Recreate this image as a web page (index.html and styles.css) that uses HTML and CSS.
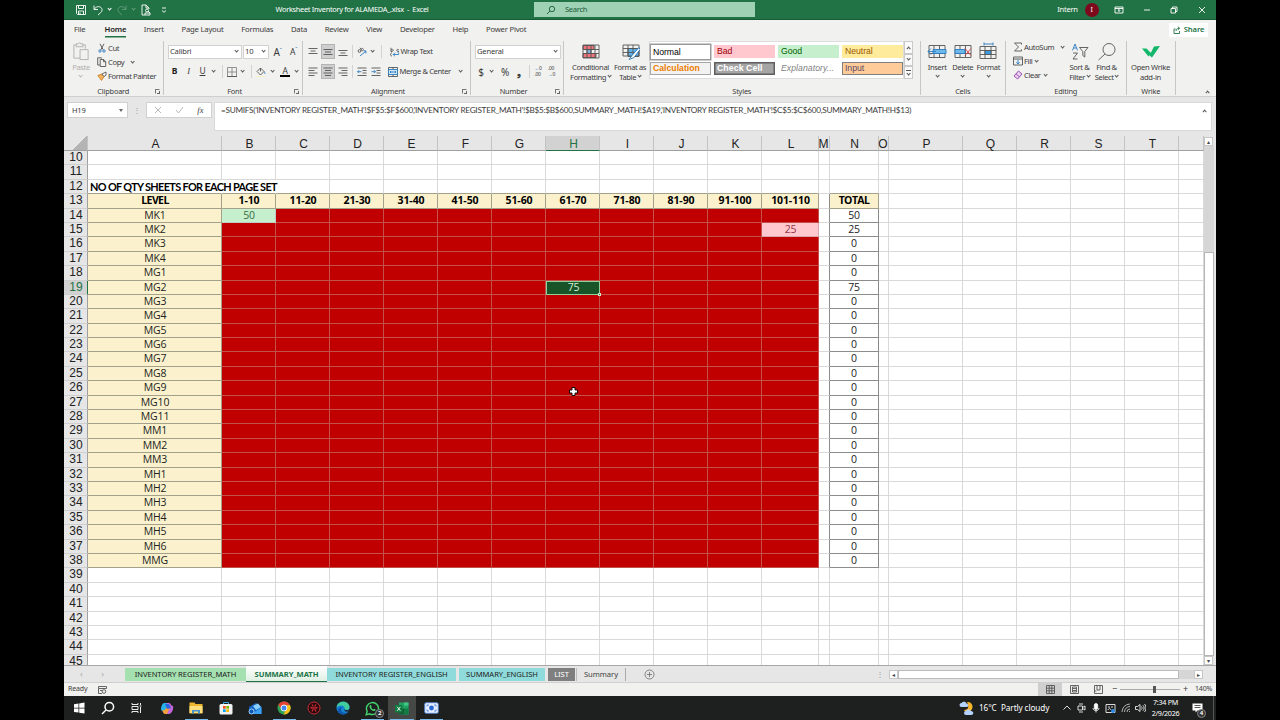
FILE: index.html
```html
<!DOCTYPE html>
<html lang="en">
<head>
  <meta charset="UTF-8">
  <meta name="viewport" content="width=device-width, initial-scale=1">
  <title>Worksheet Inventory for ALAMEDA_.xlsx - Excel</title>
  <link rel="stylesheet" href="styles.css">
</head>
<body>
<div class="desktop">

  <!-- Title bar -->
  <header class="titlebar">
    <div class="quick">
      <svg width="12" height="12" viewBox="0 0 12 12"><path d="M1.500 1.500h9v9h-8l-1-1zM3.500 1.500v3h5v-3M3.500 10.500v-3.500h5v3.500M5 8.500v2"/></svg>
      <svg width="12" height="12" viewBox="0 0 12 12"><path d="M2 1.500v4h4M2.200 5.300C4 2.500 7 2 8.700 3.300c2 1.700 1.600 4-.2 5.500L6 11"/></svg>
      <i class="chev"></i>
      <svg class="dim" width="12" height="12" viewBox="0 0 12 12"><path d="M10 1.500v4H6M9.800 5.300C8 2.500 5 2 3.300 3.300c-2 1.700-1.600 4 .2 5.500L6 11"/></svg>
      <i class="chev dim"></i>
      <svg width="12" height="12" viewBox="0 0 12 12"><path d="M5 11H2V1h4l3 3v1M6 1v3h3"/><circle cx="7" cy="6.500" r="1.500"/><path d="M5 11V9h5v2zM8 7l2 2"/></svg>
      <svg width="8" height="8" viewBox="0 0 8 8"><path d="M2 2h4M2 4.500l2 1.800 2-1.800"/></svg>
    </div>
    <div class="doc-title">Worksheet Inventory for ALAMEDA_.xlsx &nbsp;-&nbsp; Excel</div>
    <div class="search">
      <svg width="10" height="10" viewBox="0 0 10 10"><circle cx="6" cy="4" r="2.700"/><path d="M4 6L1 9"/></svg>
      <span>Search</span>
    </div>
    <div class="window-tools">
      <span class="user">Intern</span>
      <span class="avatar">I</span>
      <svg width="10" height="10" viewBox="0 0 10 10"><path d="M1 2h8v6H1zM1 3.500h8M5 7V4.500M3.800 5.700L5 4.500l1.200 1.200"/></svg>
      <svg width="8" height="8" viewBox="0 0 8 8"><path d="M1 4h6"/></svg>
      <svg width="8" height="8" viewBox="0 0 8 8"><path d="M1 2.500h4.500V7H1zM2.500 2.500V1H7v4.500H5.500"/></svg>
      <svg width="8" height="8" viewBox="0 0 8 8"><path d="M1 1l6 6M7 1L1 7"/></svg>
    </div>
  </header>

  <!-- Ribbon tabs -->
  <nav class="tabs">
    <a>File</a><a class="active">Home</a><a>Insert</a><a>Page Layout</a><a>Formulas</a><a>Data</a><a>Review</a><a>View</a><a>Developer</a><a>Help</a><a>Power Pivot</a>
    <button class="share">
      <svg width="8" height="8" viewBox="0 0 8 8"><path d="M2.500 3H1v4.500h5.500V5M3 5c.2-2 1-2.700 3-2.700M4.800.7l1.900 1.600-1.900 1.600"/></svg>Share
    </button>
  </nav>

  <!-- Ribbon -->
  <section class="ribbon">
    <div class="group clipboard">
      <div class="tools">
        <div class="big disabled">
          <svg width="18" height="20" viewBox="0 0 18 20"><path d="M4 3H1.500v14H8M11 3h2.500v4M4 2h2.200c0-1.500 2.600-1.500 2.600 0H11v3H4zM8 8h8.500v10.500H8z"/></svg>
          <span>Paste</span><i class="chev"></i>
        </div>
        <div class="list">
          <div><svg width="10" height="10" viewBox="0 0 10 10"><path d="M3 .8l3.200 6M7 .8L3.800 6.800"/><g class="blue"><circle cx="3" cy="8" r="1.200"/><circle cx="7" cy="8" r="1.200"/></g></svg>Cut</div>
          <div><svg width="10" height="10" viewBox="0 0 10 10"><path d="M3 8H.7V.8h3.500L5 1.600M3.200 2.500h3.500l2 2v5H3.200zM6.500 2.500v2.200h2.200"/></svg>Copy<i class="chev"></i></div>
          <div><svg width="10" height="10" viewBox="0 0 10 10"><path d="M.8 4.500L5 3l2 2.500-2.500 4z" fill="#f4b25c" stroke="#c98328"/><path d="M5 3l4-2v3L7 5.500z" fill="#fff"/></svg>Format Painter</div>
        </div>
      </div>
      <div class="caption">Clipboard</div><i class="launch"></i>
    </div>

    <div class="group font">
      <div class="tools rows">
        <div class="row font-top">
          <span class="combo">Calibri<i class="chev"></i></span>
          <span class="combo">10<i class="chev"></i></span>
          <span class="grow">A<sup>ˆ</sup></span>
          <span class="shrink">A<sup>ˇ</sup></span>
        </div>
        <div class="row font-bottom">
          <b>B</b><em>I</em><u>U</u><i class="chev"></i><i class="sep"></i>
          <svg width="10" height="10" viewBox="0 0 10 10"><path d="M.5.500h9v9h-9zM5 .5v9M.5 5h9" stroke="#888"/><path d="M0 9.500h10"/></svg>
          <i class="chev"></i><i class="sep"></i>
          <svg width="10" height="10" viewBox="0 0 10 10"><path d="M4.500 1L8 4.500 4.500 8 1 4.500zM4.500 1v3.500"/><path d="M8 4.500c1 1.300 1.200 2 .5 2.500" class="blue"/><path d="M0 9.500h9" stroke="#f7efc4"/></svg>
          <i class="chev"></i><span class="font-color">A</span><i class="chev"></i>
        </div>
      </div>
      <div class="caption">Font</div><i class="launch"></i>
    </div>

    <div class="group align">
      <div class="tools rows">
        <div class="row align-row">
          <svg width="10" height="10" viewBox="0 0 10 10"><path d="M.5 1.500h9M2.500 4h5M.5 6.500h9"/></svg>
          <span class="on"><svg width="10" height="10" viewBox="0 0 10 10"><path d="M.5 2.500h9M2 5h6M.5 7.500h9"/></svg></span>
          <svg width="10" height="10" viewBox="0 0 10 10"><path d="M.5 3.500h9M2.500 6h5M.5 8.500h9"/></svg>
          <i class="sep"></i>
          <svg width="10" height="10" viewBox="0 0 10 10"><circle cx="2.500" cy="4" r="1.400"/><path d="M3 .8l2.500 3.500M6 3.500c1-1.500-.5-3-1.800-1.500"/><path class="blue" d="M3 9l6-5M6.500 3.700L9 4 8.800 6.500"/></svg>
          <i class="chev"></i><i class="sep"></i>
          <span class="label"><svg width="10" height="10" viewBox="0 0 10 10"><path d="M1 .8v4M1 3c3-2 3 2 0 1.500M9 3C6 1 6 5 9 4.500M2 6c-2 0-2 3 0 3"/><path class="blue" d="M3 7.500h5.500c1-2-1-2.500-1-2.500M5 5.700L3.200 7.500 5 9.300"/></svg>Wrap Text</span>
        </div>
        <div class="row align-row">
          <svg width="10" height="10" viewBox="0 0 10 10"><path d="M.5 1h9M.5 3.500h6M.5 6h9M.5 8.500h6"/></svg>
          <span class="on"><svg width="10" height="10" viewBox="0 0 10 10"><path d="M.5 1h9M2 3.500h6M.5 6h9M2 8.500h6"/></svg></span>
          <svg width="10" height="10" viewBox="0 0 10 10"><path d="M.5 1h9M3.500 3.500h6M.5 6h9M3.500 8.500h6"/></svg>
          <i class="sep"></i>
          <svg width="10" height="10" viewBox="0 0 10 10"><path d="M.5 1h9M5.500 3.500h4M5.500 6h4M.5 8.500h9"/><path class="blue" d="M.5 4.700h4M2 3.200L.5 4.700 2 6.200"/></svg>
          <svg width="10" height="10" viewBox="0 0 10 10"><path d="M.5 1h9M5.500 3.500h4M5.500 6h4M.5 8.500h9"/><path class="blue" d="M.5 4.700h4M3 3.200l1.500 1.500L3 6.200"/></svg>
          <i></i>
          <span class="label merge"><svg width="10" height="10" viewBox="0 0 10 10"><path d="M.5.500h9v9h-9zM5 .5v2M5 7.500v2"/><path d="M.5 2.500h9v5h-9z" fill="#cfe6f7" stroke="#2b7cc0"/><path class="blue" d="M2 5h6M3 4L2 5l1 1M7 4l1 1-1 1"/></svg>Merge &amp; Center<i class="chev"></i></span>
        </div>
      </div>
      <div class="caption">Alignment</div><i class="launch"></i>
    </div>

    <div class="group number">
      <div class="tools rows">
        <div class="row"><span class="combo wide">General<i class="chev"></i></span></div>
        <div class="row number-row">
          <span>$</span><i class="chev"></i><span>%</span><strong>❟</strong><i class="sep"></i>
          <span class="dec"><s>←</s>0<br>.00</span><span class="dec">.00<br><s>→</s>0</span>
        </div>
      </div>
      <div class="caption">Number</div><i class="launch"></i>
    </div>

    <div class="group styles">
      <div class="tools">
        <div class="big">
          <svg width="18" height="16" viewBox="0 0 18 16"><path d="M1 2h11v4H1z" fill="#f2737a"/><path d="M5 6h4v4H5z" fill="#7fb0dd"/><path d="M1 10h13v4H1z" fill="#f2737a"/><path d="M1 1.500h16v13H1zM1 6h16M1 10h16M5 1.500v13M9 1.500v13M13 1.500v13" stroke="#555"/></svg>
          <span>Conditional<br>Formatting <i class="chev"></i></span>
        </div>
        <div class="big">
          <svg width="18" height="18" viewBox="0 0 18 18"><path d="M6 6h11v8H6z" fill="#5fb2ea"/><path d="M1 2.500h16v11H1zM1 6h16M1 10h16M6 2.500v11M11 2.500v11" stroke="#555"/><path d="M17 5l-7 8-3 4 5-2 6-8z" fill="#fff" stroke="#2b7cc0"/></svg>
          <span>Format as<br>Table <i class="chev"></i></span>
        </div>
        <div class="gallery">
          <span class="st normal">Normal</span><span class="st bad">Bad</span><span class="st good">Good</span><span class="st neutral">Neutral</span>
          <span class="st calc">Calculation</span><span class="st check">Check Cell</span><span class="st expl">Explanatory...</span><span class="st input">Input</span>
        </div>
        <div class="gallery-scroll"><span><i class="chev up"></i></span><span><i class="chev"></i></span><span class="more"><i class="chev"></i></span></div>
      </div>
      <div class="caption">Styles</div>
    </div>

    <div class="group cells">
      <div class="tools">
        <div class="big"><svg width="20" height="16" viewBox="0 0 20 16"><path d="M2 2h16v12H2zM2 10h16M7 2v12M12.500 2v12"/><path d="M6 6h13v4H6z" fill="#6cb8ea" stroke="#2b7cc0"/><path class="blue" d="M9 8H1M4 5L1 8l3 3"/></svg><span>Insert</span><i class="chev"></i></div>
        <div class="big"><svg width="20" height="16" viewBox="0 0 20 16"><path d="M2 2h16v12H2zM2 10h16M7 2v12M12.500 2v12"/><path d="M2 6h10v4H2z" fill="#6cb8ea" stroke="#2b7cc0"/><path d="M12 5l6 7M18 5l-6 7" stroke="#e0404a"/></svg><span>Delete</span><i class="chev"></i></div>
        <div class="big"><svg width="20" height="18" viewBox="0 0 20 18"><path d="M2 4h16v12H2zM2 8h16M2 12h16M7 4v12M13 4v12"/><path d="M7 8h6v4H7z" fill="#3c9be0"/><path class="blue" d="M6 1.500h9M6 0v3M15 0v3"/></svg><span>Format</span><i class="chev"></i></div>
      </div>
      <div class="caption">Cells</div>
    </div>

    <div class="group editing">
      <div class="tools">
        <div class="list">
          <div><svg width="10" height="10" viewBox="0 0 10 10"><path d="M8.500 2.500V1H1.500l4 4-4 4h7V7.500"/></svg>AutoSum<i class="chev far"></i></div>
          <div><svg width="10" height="10" viewBox="0 0 10 10"><path d="M.5 1h9v8h-9zM.5 3h9"/><path class="blue" d="M5 3.500v4.500M3.300 6.300L5 8l1.700-1.700"/></svg>Fill<i class="chev"></i></div>
          <div><svg width="10" height="10" viewBox="0 0 10 10"><path d="M5.500 1L9 4 4.500 9 1 6zM3 3.800l3.500 3" fill="#ecd3f3" stroke="#8e3fa8"/></svg>Clear<i class="chev"></i></div>
        </div>
        <div class="big"><svg width="18" height="18" viewBox="0 0 18 18"><path class="blue" d="M1.500 8L4 1.500 6.500 8M2.500 5.500h3"/><path d="M2 10.500h4.500L2 16.500h4.500M8.500 5h8.500l-3.200 4v5.500l-2-1.500V9z"/></svg><span>Sort &amp;<br>Filter <i class="chev"></i></span></div>
        <div class="big"><svg width="20" height="18" viewBox="0 0 20 18"><circle cx="12" cy="7" r="6"/><path d="M8 11.500L1.500 17.500"/></svg><span>Find &amp;<br>Select <i class="chev"></i></span></div>
      </div>
      <div class="caption">Editing</div>
    </div>

    <div class="group wrike">
      <div class="tools">
        <div class="big"><svg width="20" height="16" viewBox="0 0 20 16"><path d="M1 5h4.500L10 9.500 7.500 13zM13 3l6-.5L11 14l-2.500-2z" fill="#12b76a" stroke="none"/></svg><span>Open Wrike<br>add-in</span></div>
      </div>
      <div class="caption">Wrike</div>
    </div>
    <div class="collapse"><i class="chev up"></i></div>
  </section>

  <!-- Formula bar -->
  <section class="formula-bar">
    <div class="name-box">H19<i class="tri"></i></div>
    <div class="grip">⋮</div>
    <div class="fx-box">
      <svg width="8" height="8" viewBox="0 0 8 8"><path d="M1 1l6 6M7 1L1 7"/></svg>
      <svg width="9" height="8" viewBox="0 0 9 8"><path d="M1 4l2.500 3L8 1"/></svg>
      <em>fx</em>
    </div>
    <div class="formula"><span>=SUMIFS('INVENTORY REGISTER_MATH'!$F$5:$F$600,'INVENTORY REGISTER_MATH'!$B$5:$B$600,SUMMARY_MATH!$A19,'INVENTORY REGISTER_MATH'!$C$5:$C$600,SUMMARY_MATH!H$13)</span><i class="chev up"></i></div>
  </section>

  <!-- Worksheet -->
  <main class="sheet">
    <div class="cells-grid" id="grid"></div>
    <div class="vscroll"><span class="arrow">▴</span><span class="track"></span><span class="thumb"></span><span class="arrow">▾</span></div>
    <svg class="pointer" width="9" height="9" viewBox="0 0 9 9"><path d="M3 .5h3V3h2.500v3H6v2.500H3V6H.5V3H3z" fill="#fff" stroke="#000"/></svg>
  </main>

  <!-- Sheet tabs -->
  <nav class="sheet-tabs">
    <span class="arrows"><span>‹</span><span>›</span></span>
    <a class="green">INVENTORY REGISTER_MATH</a>
    <a class="current">SUMMARY_MATH</a>
    <a class="teal first">INVENTORY REGISTER_ENGLISH</a>
    <a class="teal second">SUMMARY_ENGLISH</a>
    <a class="gray">LIST</a>
    <a class="plain">Summary</a>
    <svg class="add" width="11" height="11" viewBox="0 0 11 11"><circle cx="5.500" cy="5.500" r="4.500"/><path d="M5.500 3v5M3 5.500h5"/></svg>
    <span class="grip">⋮</span>
    <div class="hscroll"><span class="arrow">◂</span><span class="thumb"></span><span class="track"></span><span class="arrow">▸</span></div>
  </nav>

  <!-- Status bar -->
  <footer class="status">
    <span class="ready">Ready</span>
    <svg width="9" height="8" viewBox="0 0 9 8"><path d="M.5.500h8v2h-8zM.5 2.500v5H4M2 4.500h2"/><circle cx="6" cy="5.500" r="1.800"/></svg>
    <div class="views">
      <span class="on"><svg width="9" height="9" viewBox="0 0 9 9"><path d="M.5.500h8v8h-8zM.5 3.200h8M.5 5.800h8M3.200.5v8M5.800.5v8"/></svg></span>
      <span><svg width="9" height="9" viewBox="0 0 9 9"><path d="M.5.500h8v8h-8zM2.500 2h4v5h-4zM3 3.500h3M3 5.500h3"/></svg></span>
      <span><svg width="9" height="9" viewBox="0 0 9 9"><path d="M.5.500h8v8h-8zM3 .5V5h3V.5M.5 6h2"/></svg></span>
    </div>
    <div class="zoom"><span>−</span><span class="slider"><i></i></span><span>+</span></div>
    <span class="percent">140%</span>
  </footer>

  <!-- Taskbar -->
  <footer class="taskbar">
    <div class="apps">
      <span><svg width="12" height="12" viewBox="0 0 12 12"><path d="M1 2.200l4.500-.7v4.200H1zM6.200 1.400L11.500.6v5.100H6.200zM1 6.400h4.500v4.200L1 9.900zM6.200 6.400h5.300v5.100l-5.300-.8z" fill="#fff" stroke="none"/></svg></span>
      <span><svg class="white thick" width="14" height="14" viewBox="0 0 14 14"><circle cx="8.300" cy="5.700" r="4.300"/><path d="M5 9L1 13"/></svg></span>
      <span><svg class="white" width="12" height="12" viewBox="0 0 12 12"><path d="M1 1v1.500h6V1M1 4.500h6v3H1zM1 11V9.500h6V11M9.500 1v2M9.500 5v6M8.500 4h2"/></svg></span>
      <span><svg width="14" height="13" viewBox="0 0 14 13"><path d="M4 1h4l-2 7c-.5 2-5 2-5-1C1 5 2.500 1 4 1z" fill="#27b4e8" stroke="none"/><path d="M7 1h2c2 0 1.500 3 4 3 1 3-1.500 8-4 8H5z" fill="#c467dc" stroke="none"/><path d="M2 8c3 1 4-1 5-4l3 1-3 7H5C3 12 3 9 2 8z" fill="#f9a03c" stroke="none"/><path d="M5 2h4l2 4-4 1z" fill="#2867dd" stroke="none"/></svg></span>
      <span class="open"><svg width="14" height="12" viewBox="0 0 14 12"><path d="M.5.500h5l1 1.500h7v9.500H.5z" fill="#eeb62c" stroke="none"/><path d="M.5 4h13v7H.5z" fill="#ffdf7d" stroke="none"/><path d="M3 8h8v3.500H9V9.500H5v2H3z" fill="#4794cd" stroke="none"/></svg></span>
      <span><svg width="14" height="14" viewBox="0 0 14 14"><path d="M4.500 4V1.500h5V4" stroke="#3cb5ed"/><rect x=".5" y="3" width="13" height="10.500" rx="1.500" fill="#f2f2f2" stroke="none"/><path d="M4 5h2.700v2.700H4z" fill="#f25022" stroke="none"/><path d="M7.300 5H10v2.700H7.300z" fill="#7fba00" stroke="none"/><path d="M4 8.300h2.700V11H4z" fill="#00a4ef" stroke="none"/><path d="M7.300 8.300H10V11H7.300z" fill="#ffb900" stroke="none"/></svg></span>
      <span><svg width="14" height="13" viewBox="0 0 14 13"><path d="M1 5l7-4 5.500 4v7H1z" fill="#1766c8" stroke="none"/><path d="M5 4l5-2.500L13 5 8 8z" fill="#8bd1fb" stroke="none"/><path d="M4 12l9.500-7v7z" fill="#3aa1f3" stroke="none"/><circle cx="3.500" cy="9.500" r="2.500" fill="#0c59b5" stroke="#a9d8ff"/></svg></span>
      <span class="open"><svg width="14" height="14" viewBox="0 0 14 14"><circle cx="7" cy="7" r="6.500" fill="#30a454" stroke="none"/><path d="M1.300 4A6.500 6.500 0 0 1 13 4.300H7L4.500 8z" fill="#e84335" stroke="none"/><path d="M13 4.300A6.500 6.500 0 0 1 6.500 13.500L9.500 8 8 4.300z" fill="#fbc116" stroke="none"/><circle cx="7" cy="7" r="3" fill="#4285f4" stroke="#fff"/></svg></span>
      <span><svg width="14" height="14" viewBox="0 0 14 14"><circle cx="7" cy="7" r="6" fill="#260b0d" stroke="#d92c36"/><circle cx="7" cy="7" r="1.200" stroke="#d92c36"/><path d="M5 3.500l1 1.500M9 3.500L8 5M3.500 6.500l2 .5M10.500 6.500l-2 .5M5 10.500l1-2M9 10.500l-1-2" stroke="#d92c36" stroke-width="1.300"/></svg></span>
      <span><svg width="14" height="14" viewBox="0 0 14 14"><circle cx="7" cy="7" r="6.500" fill="#1683d4" stroke="none"/><path d="M.7 6C1.500-1 13-1 13.500 6c0 3-4 3.500-5 2 1-3-3-5-7.800-2z" fill="#41cc9b" stroke="none"/><path d="M6 6c-3 4 1 7 5.500 5.500C9 15 2 14 2 9c0-2 2-3 4-3z" fill="#0c56ab" stroke="none"/><path d="M8 8c1 1.800 4 1.500 5.300.2L12 10.500c-2 .5-4-.5-4-2.500z" fill="#1f2020" stroke="none"/></svg></span>
      <span class="open whatsapp"><svg width="15" height="15" viewBox="0 0 15 15"><path d="M1.200 13.800l1-3.400a6 6 0 1 1 2.400 2.400z" fill="none" stroke="#43d66c" stroke-width="1.400"/><path d="M4.800 4.500c.8-1 1.500 0 1.800 1l-.5.8c.5 1.200 1.200 1.800 2.300 2.200l.8-.8c1.500.6 2 1 .8 2C7.500 11 3.500 7 4.800 4.500z" fill="#43d66c" stroke="none"/></svg><b>2</b></span>
      <span class="open active-app"><svg width="14" height="13" viewBox="0 0 14 13"><path d="M4 .5h9.500v12H4z" fill="#21a366" stroke="none"/><path d="M4 6.500h5v6H4z" fill="#185c37" stroke="none"/><path d="M9 6.500h4.500v6H9z" fill="#107c41" stroke="none"/><path d="M9 .5h4.500v3H9z" fill="#43c684" stroke="none"/><path d="M0 3h7.500v7.500H0z" fill="#107c41" stroke="none"/><path d="M2.200 4.800l3.200 4M5.400 4.800l-3.200 4" stroke="#fff"/></svg></span>
      <span class="open"><svg width="15" height="12" viewBox="0 0 15 12"><rect x=".7" y=".7" width="13.600" height="10.600" rx="1.500" fill="#e6efff" stroke="#5181d4"/><path d="M3 4.500V3h2M10 3h2v1.500M12 7.500V9h-2M5 9H3V7.500" stroke="#5181d4"/><circle cx="7.500" cy="6" r="2.400" fill="#2a68d5" stroke="none"/></svg></span>
    </div>
    <div class="tray">
      <svg class="weather" width="16" height="15" viewBox="0 0 16 15"><path d="M8 1c5-1 8 6 3 9-3 2-6 0-6-1 5 0 5-4 3-8z" fill="#f7b52c" stroke="none"/><path d="M2.500 6a2 2 0 0 1 0-4C4 0 7 .500 7.500 2.500 10 3 9.500 6 8 6zM7 14a2 2 0 0 1 0-4c1-2 4-2 5 0 3 0 3 4 0 4z" fill="#b5d2ff" stroke="none"/></svg>
      <span class="temp">16°C</span><span class="cond">Partly cloudy</span>
      <div class="tray-icons">
        <svg width="10" height="10" viewBox="0 0 10 10"><path d="M1.500 6.500L5 3l3.500 3.500"/></svg>
        <svg width="10" height="10" viewBox="0 0 10 10"><path d="M3 1h4M3 9h4M2 3h4.500v4H2zM6.500 4.500L9 3v4L6.500 5.500"/></svg>
        <svg width="10" height="10" viewBox="0 0 10 10"><rect x="3.300" y=".5" width="3.400" height="6" rx="1.700" fill="#fff"/><path d="M2 5c0 3.500 6 3.500 6 0M5 7.500v2"/></svg>
        <svg width="11" height="11" viewBox="0 0 11 11"><path d="M1 1.500h9v8H1zM3 4h2M6 4h2M3 7c1-2 2-2 3 0"/><circle cx="8" cy="8" r="2" fill="#2e8ce6" stroke="none"/></svg>
        <svg width="10" height="10" viewBox="0 0 10 10"><path d="M1 9a8 8 0 0 1 8-8M3.500 9A5.500 5.500 0 0 1 9 3.500M6 9a3 3 0 0 1 3-3M8 9l1-1" stroke="#bbb"/></svg>
        <svg width="11" height="10" viewBox="0 0 11 10"><path d="M.5 3.500h2L5 1.500v7l-2.500-2h-2zM6.500 3.500c.8 1 .8 2 0 3M8 2.300c1.500 1.700 1.500 3.700 0 5.400M9.500 1c2 2.500 2 5.500 0 8"/></svg>
      </div>
      <div class="clock">7:34 PM<br>2/9/2026</div>
      <div class="notice"><svg width="11" height="10" viewBox="0 0 11 10"><path d="M.5.500h10v7h-5L3.500 9.500v-2h-3z" fill="#fff" stroke="none"/><path d="M2.500 2.500h6M2.500 4.500h6" stroke="#444"/></svg><b>4</b></div>
    </div>
  </footer>
</div>
<script src="script.js"></script>
</body>
</html>
```
FILE: styles.css
```css
:root {
  --ui: 'Noto Sans', 'Open Sans', sans-serif;
  --calibri: Lato, 'Open Sans', sans-serif;
  --cell: 'Open Sans', 'Noto Sans', sans-serif;
  --arial: 'Liberation Sans', Arial, sans-serif;
  --green: #217346;
  --line: #d9d9d9;
  --text: #3c3c3c;
}
*, *::before, *::after { box-sizing: border-box; margin: 0; padding: 0; }
body {
  background: #000;
  width: 1280px;
  height: 720px;
  overflow: hidden;
  font: 7.6px/1.2 var(--ui);
  color: var(--text);
}
svg { display: block; flex: none; fill: none; stroke: #555; stroke-width: .9; }
svg .blue { stroke: #2b7cc0; }
button { font: inherit; border: none; }
.desktop {
  width: 1152px;
  height: 720px;
  margin: 0 auto;
  display: flex;
  flex-direction: column;
  background: #f1f1ef;
}
.chev {
  display: inline-block;
  flex: none;
  width: 3.2px;
  height: 3.2px;
  border-right: 1px solid #555;
  border-bottom: 1px solid #555;
  transform: translateY(-1px) rotate(45deg);
}
.chev.up { transform: translateY(1px) rotate(225deg); }
.sep { width: 1px; height: 13px; background: #d2d2d2; }

/* title bar */
.titlebar {
  height: 20px;
  flex: none;
  display: grid;
  grid-template-columns: 106px 364px 221px 1fr;
  align-items: center;
  background: var(--green);
  border-bottom: 1px solid #185c37;
  color: #fff;
  letter-spacing: -.3px;
}
.titlebar svg { stroke: #fff; }
.titlebar .chev { border-color: #fff; }
.titlebar .dim { opacity: .3; }
.quick {
  display: grid;
  grid-template-columns: 16px 17px 7px 18px 5px 20px 16px;
  padding-left: 9px;
  align-items: center;
  justify-items: center;
}
.doc-title { text-align: center; font-size: 7.4px; white-space: nowrap; }
.search {
  height: 15px;
  display: flex;
  align-items: center;
  gap: 9px;
  padding-left: 12px;
  background: #9fd1b4;
  color: #185c37;
}
.titlebar .search svg { stroke: #185c37; }
.window-tools {
  display: grid;
  grid-template-columns: 25px 23px 32px 24px 29px 28px;
  padding-left: 300px;
  align-items: center;
  justify-items: center;
}
.avatar {
  width: 14px;
  height: 14px;
  border-radius: 50%;
  background: #7d0a1c;
  font-size: 7px;
  line-height: 14px;
  text-align: center;
}

/* ribbon tabs */
.tabs {
  height: 20px;
  flex: none;
  display: flex;
  align-items: center;
  padding-left: 10px;
  gap: 17.7px;
}
.tabs a { font-size: 7.7px; line-height: 13px; letter-spacing: -.22px; white-space: nowrap; margin-top: -1px; }
.tabs .active { color: #222; font-weight: 600; box-shadow: 0 1.5px var(--green); margin-left: 1.5px; }
.share {
  margin-left: auto;
  margin-right: 8px;
  width: 39px;
  height: 14px;
  display: flex;
  align-items: center;
  justify-content: center;
  gap: 3px;
  background: #fff;
  color: var(--green);
  font-weight: 600;
  letter-spacing: -.1px;
}
.share svg { stroke: var(--green); }

/* ribbon */
.ribbon {
  height: 57px;
  flex: none;
  display: flex;
  border-bottom: 1px solid #cfcfcf;
  letter-spacing: -.38px;
}
.group {
  height: 54px;
  margin-top: 1px;
  display: grid;
  grid-template: 43px 11px / 1fr;
  position: relative;
  border-right: 1px solid #c6c6c6;
  flex: none;
}
.caption { text-align: center; line-height: 14px; font-size: 7.4px; letter-spacing: -.2px; }
.launch {
  position: absolute;
  right: 3px;
  bottom: 1px;
  width: 5px;
  height: 5px;
  border: 1px solid #777;
  border-right-color: transparent;
  border-bottom-color: transparent;
}
.launch::after {
  content: '';
  position: absolute;
  right: -1px;
  bottom: -1px;
  width: 3px;
  height: 3px;
  border-right: 1px solid #666;
  border-bottom: 1px solid #666;
}
.tools { display: flex; }
.big {
  display: flex;
  flex-direction: column;
  align-items: center;
  text-align: center;
  line-height: 9.5px;
  white-space: nowrap;
}
.big svg { height: 19px; margin: 1px 0 2px; }
.big > .chev { margin-top: 2px; }
.big span .chev { transform: translateY(-2px) rotate(45deg); }
.disabled { color: #b0b0b0; }
.disabled svg { stroke: #aaa; }
.disabled .chev { border-color: #bbb; }
.list { display: flex; flex-direction: column; }
.list > div { height: 14.2px; display: flex; align-items: center; gap: 1px; white-space: nowrap; }
.list .chev { margin-left: 6px; }
.rows { flex-direction: column; padding-top: 3px; gap: 5px; }
.row { height: 15px; display: grid; align-items: center; justify-items: center; }
.combo {
  width: 100%;
  height: 14px;
  padding: 0 2.5px 0 1.5px;
  display: flex;
  align-items: center;
  justify-content: space-between;
  background: #fff;
  border: 1px solid #d2d2d2;
  letter-spacing: -.2px;
}
.on { display: grid; place-items: center; background: #cfcfcf; }

.clipboard { width: 99.5px; }
.clipboard .big { width: 28px; padding-left: 6px; }
.clipboard .list { padding-left: 5px; }
.font { width: 139px; padding-left: 4px; }
.font-top { grid-template-columns: 74px 26px 16px 14px; gap: 1px; }
.grow, .shrink { font-size: 10px; }
.shrink { font-size: 8.5px; }
.grow sup, .shrink sup { font-size: 6px; color: #2b7cc0; }
.font-bottom { grid-template-columns: 14px 14px 14px 9px 8px 11px 11px 6px 13px 10px 15px 8px; font-size: 8.5px; justify-content: start; }
.font-bottom b { color: #222; }
.font-bottom em { font-family: 'Liberation Serif', serif; }
.font-color { border-bottom: 2.5px solid #000; line-height: 9px; width: 10px; text-align: center; }
.align { width: 168px; padding-left: 3px; }
.align-row { grid-template-columns: 15px 15px 14px 6px 13px 8px 10px 83px; justify-content: start; }
.align-row:last-child { grid-template-columns: 15px 15px 14px 6px 13px 14px 4px 84px; }
.align-row .on { width: 14px; height: 15px; border: 1px solid #b3b3b3; }
.label { justify-self: start; display: flex; align-items: center; gap: 1px; padding-left: 3px; white-space: nowrap; }
.label .chev { margin-left: 6px; }
.align-row .merge { padding-left: 1px; gap: 2px; }
.number { width: 93.5px; padding: 0 5px 0 4px; }
.number .caption { padding-right: 8px; }
.number-row { grid-template-columns: 13px 9px 17px 11px 9px 9px 18px; justify-content: start; font-size: 10px; }
.dec { font-size: 5px; line-height: 5.5px; }
.dec s { text-decoration: none; color: #2b7cc0; }

.styles { width: 356.5px; }
.styles .big { flex: none; }
.styles .big:first-child { width: 53px; }
.styles .big:nth-child(2) { width: 32px; padding-right: 4px; }
.styles .big:nth-child(2) svg { margin-left: -1px; }
.styles .big:nth-child(2) span { margin-left: -2px; }
.gallery {
  width: 255px;
  height: 38px;
  flex: none;
  padding: 1px 0 0 0;
  display: grid;
  grid-template-columns: repeat(4, 61px);
  grid-template-rows: 17px 16px;
  column-gap: 3px;
  align-items: center;
  background: #fff;
  border: 1px solid #ddd;
}
.st { height: 13px; padding-left: 2px; font: 8.7px/11px var(--arial); letter-spacing: -.05px; border: 1px solid transparent; white-space: nowrap; overflow: hidden; }
.normal { height: 16px; line-height: 14px; border-color: #9a9a9a; color: #000; box-shadow: 0 0 0 .5px #9a9a9a; }
.bad { background: #ffc7ce; color: #9c0006; }
.good { background: #c6efce; color: #006100; }
.neutral { background: #ffeb9c; color: #9c5700; }
.calc { background: #f2f2f2; color: #ee7d00; border-color: #a5a5a5; font-weight: bold; letter-spacing: 0; }
.check { background: #a5a5a5; color: #fff; border-color: #5f5f5f; box-shadow: inset 0 0 0 .5px #5f5f5f; font-weight: bold; letter-spacing: .1px; }
.expl { color: #7f7f7f; font-style: italic; letter-spacing: .05px; }
.input { background: #ffcc99; color: #5a4a66; border-color: #7f7f7f; }
.gallery-scroll { width: 9px; height: 38px; flex: none; display: grid; grid-template-rows: repeat(3, 1fr); }
.gallery-scroll span { display: grid; place-items: center; border: 1px solid #c9c9c9; background: #fafafa; }
.gallery-scroll .more::before { content: ''; width: 5px; height: 1px; background: #555; margin-bottom: -3px; }
.gallery-scroll .more .chev { margin-top: -1px; }
.cells { width: 85.5px; }
.cells .tools { padding-left: 4px; }
.cells .big { width: 25.5px; }
.editing { width: 120.5px; }
.editing .list { width: 60px; padding-left: 7px; margin-top: -1px; }
.editing .list .chev { margin-left: 2px; }
.editing .list .far { margin-left: 6px; }
.editing .big { width: 27px; }
.wrike { width: 49.5px; }
.wrike .big { width: 48px; letter-spacing: -.3px; }
.collapse { flex: 1; display: flex; align-items: flex-end; justify-content: center; padding: 0 0 3px 24px; }

/* formula bar */
.formula-bar {
  height: 39px;
  flex: none;
  display: flex;
  padding: 5px 4px 0 3px;
  background: #e6e6e6;
}
.name-box, .fx-box { height: 16px; background: #fff; border: 1px solid #d0d0d0; display: flex; align-items: center; }
.name-box { width: 61px; padding: 0 4px; justify-content: space-between; font-size: 7.5px; letter-spacing: -.2px; }
.tri { border: 2px solid transparent; border-top: 3px solid #666; border-bottom: 0; }
.grip { width: 18px; line-height: 17px; text-align: center; color: #999; }
.fx-box { width: 65.5px; padding: 0 7px; justify-content: space-between; }
.fx-box svg { stroke: #b0b0b0; }
.fx-box em { font: italic 8.5px 'Liberation Serif', serif; }
.formula {
  flex: 1;
  height: 29px;
  margin-left: 2.5px;
  padding: 1px 5px 0 6px;
  display: flex;
  justify-content: space-between;
  background: #fff;
  border: 1px solid #d9d9d9;
  font: 8.2px/13px var(--calibri);
  letter-spacing: -.26px;
  white-space: nowrap;
}
.formula .chev { margin-top: 5px; }

/* worksheet */
.sheet {
  height: 530px;
  flex: none;
  display: flex;
  position: relative;
  overflow: hidden;
  background: #e6e6e6;
  border-bottom: 1px solid #a6a6a6;
}
.cells-grid {
  width: 1140px;
  height: 529px;
  flex: none;
  display: grid;
  grid-template-columns: 24px 134px repeat(10, 54px) 57px 10.5px 49px 10.5px 74px repeat(4, 54px) 25px;
  grid-template-rows: 15px;
  grid-auto-rows: 14.4px;
}
.cells-grid div {
  border-right: 1px solid var(--line);
  border-bottom: 1px solid var(--line);
  padding-left: 1px;
  background: #fff;
  font: 10.5px/13px var(--cell);
  letter-spacing: -.15px;
  color: #222;
  text-align: center;
  white-space: nowrap;
}
.cells-grid .head {
  background: #e6e6e6;
  border-right-color: #c3c3c3;
  border-bottom-color: #a0a0a0;
  padding-left: 2px;
  font: 12px/16px var(--arial);
  letter-spacing: 0;
  color: #222;
}
.cells-grid .narrow { padding-left: 0; text-indent: -.5px; }
.cells-grid .rowhead { border-bottom-color: #cfcfcf; border-right-color: #a0a0a0; padding-left: 1px; font-size: 12px; line-height: 13.4px; }
.cells-grid .corner { background: linear-gradient(135deg, #e6e6e6 62%, #b4b4b4 62%); }
.cells-grid .picked { background: #d2d2d2; color: var(--green); border-bottom-color: var(--green); }
.cells-grid .rowhead.picked { border-right-color: var(--green); border-bottom-color: #cfcfcf; }
.cells-grid .title {
  font: bold 10.9px/13px var(--calibri);
  letter-spacing: -.65px;
  text-align: left;
  padding-left: 2px;
  color: #000;
  position: relative;
  z-index: 1;
}
.cells-grid .title, .cells-grid .under-title { border-right-color: #fff; }
.cells-grid .cream { background: #fbf2cd; border-color: #a3a08c; }
.cells-grid .label-row { font-weight: bold; letter-spacing: -.1px; color: #000; }
.cells-grid .word { letter-spacing: -.6px; }
.cells-grid .edge { border-bottom-color: #a3a08c; }
.cells-grid .red { background: #c00000; border-color: #c4504c; }
.cells-grid .fifty { background: #c6efce; color: #3a6b45; border-color: #bfcfbd; }
.cells-grid .pink { background: #ffc7ce; color: #94354a; border-color: #dba6ab; }
.cells-grid .selected { background: #185427; color: #d5f0da; border: none; box-shadow: inset 0 0 0 1px #8fd19a; position: relative; }
.selected::after {
  content: '';
  position: absolute;
  right: -1px;
  bottom: -1px;
  width: 3px;
  height: 3px;
  background: #217346;
  border: 1px solid #c9e8cd;
}
.cells-grid .total { border-color: #8c8c8c; }
.cells-grid .before-total { border-right-color: #8c8c8c; }
.vscroll { width: 10px; margin-top: 1px; display: flex; flex-direction: column; align-items: stretch; }
.vscroll .track { height: 106px; background: #d6d6d6; }
.vscroll .thumb { flex: 1; background: #fff; border: 1px solid #b5b5b5; }
.arrow { width: 9px; height: 9px; line-height: 8px; font-size: 6px; text-align: center; background: #fff; border: 1px solid #c6c6c6; color: #444; flex: none; font-family: 'DejaVu Sans', sans-serif; }
.pointer { position: absolute; left: 505px; top: 251px; }

/* sheet tabs */
.sheet-tabs { height: 17px; flex: none; display: flex; align-items: center; background: #e6e6e6; border-bottom: 1px solid #d0d0d0; }
.sheet-tabs a { height: 13px; line-height: 13px; text-align: center; font-size: 7.6px; letter-spacing: -.05px; white-space: nowrap; flex: none; color: #222; }
.arrows { width: 61px; padding: 0 21px 0 16px; display: flex; justify-content: space-between; color: #aaa; font-size: 9px; }
.sheet-tabs .green { width: 121px; background: #a5e0b0; }
.sheet-tabs .current { width: 81px; height: 16px; line-height: 16px; background: linear-gradient(#fff, #e0f0e4); color: var(--green); font-weight: bold; border-bottom: 1px solid var(--green); }
.sheet-tabs .teal { background: #8fdbdb; }
.sheet-tabs .first { width: 129px; }
.sheet-tabs .second { width: 86px; margin-left: 3px; }
.sheet-tabs .gray { width: 27px; margin-left: 3px; background: #7f7f7f; color: #fff; }
.sheet-tabs .plain { width: 50px; border-right: 1px solid #aaa; border-left: 1px solid #bbb; margin-left: 1px; color: #444; }
.add { margin-left: 18px; stroke: #777; }
.sheet-tabs .grip { margin-left: 216px; }
.hscroll { width: 314px; height: 9px; display: flex; background: #d6d6d6; }
.hscroll .thumb { width: 281px; background: #fff; border: 1px solid #bbb; }
.hscroll .track { flex: 1; }

/* status bar */
.status { height: 13px; flex: none; display: flex; align-items: center; background: #f1f1ef; font-size: 7px; letter-spacing: -.15px; }
.ready { width: 34px; padding-left: 4px; }
.views { margin-left: auto; display: flex; }
.views span { width: 24px; height: 13px; display: grid; place-items: center; }
.views .on { background: #cfcfcf; }
.zoom { display: flex; align-items: center; gap: 3px; margin-left: 2px; font-size: 9px; }
.slider { width: 60px; height: 1px; background: #aaa; display: flex; align-items: center; justify-content: center; }
.slider i { width: 3px; height: 7px; margin-left: 8px; background: #555; }
.percent { width: 21px; margin-left: 7px; }

/* taskbar */
.taskbar { height: 24px; flex: none; display: flex; background: #1e201f; color: #fff; }
.apps { display: flex; flex: none; }
.apps > span { width: 29.4px; height: 24px; display: grid; place-items: center; position: relative; }
.apps .open::after {
  content: '';
  position: absolute;
  left: 3px;
  right: 3px;
  bottom: 0;
  height: 1.5px;
  background: #76b9ed;
}
.apps .active-app { background: #464846; background-clip: content-box; padding: 0 1px; }
.taskbar .white { stroke: #fff; }
.taskbar .thick { stroke-width: 1.5; }
.whatsapp b, .notice b {
  position: absolute;
  right: 3px;
  bottom: 2px;
  width: 9px;
  height: 9px;
  border-radius: 50%;
  background: #333;
  border: 1px solid #888;
  font-size: 6px;
  line-height: 7px;
  text-align: center;
}
.tray { margin-left: auto; display: flex; align-items: center; font-size: 8.2px; letter-spacing: -.1px; white-space: nowrap; }
.weather { margin-right: 4px; }
.temp { width: 22px; }
.cond { width: 61px; }
.tray-icons { display: flex; width: 84px; justify-content: space-between; }
.tray svg { stroke: #eee; }
.clock { width: 39px; text-align: center; font-size: 7.2px; line-height: 11px; letter-spacing: -.3px; }
.notice { width: 29px; height: 24px; padding: 7px 0 0 7px; position: relative; border-right: 1px solid #555; margin-right: 2px; }
.notice b { right: 7px; }
```
FILE: script.js
```js
const grid = document.getElementById('grid');
const cols = 'ABCDEFGHIJKLMNOPQRST'.split('').concat('');
const levels = ['MK1', 'MK2', 'MK3', 'MK4', 'MG1', 'MG2', 'MG3', 'MG4', 'MG5', 'MG6', 'MG7', 'MG8', 'MG9', 'MG10', 'MG11',
  'MM1', 'MM2', 'MM3', 'MH1', 'MH2', 'MH3', 'MH4', 'MH5', 'MH6', 'MMG'];
const ranges = ['1-10', '11-20', '21-30', '31-40', '41-50', '51-60', '61-70', '71-80', '81-90', '91-100', '101-110'];
const totals = { 14: 50, 15: 25, 19: 75 };

function add(text, cls) {
  const cell = document.createElement('div');
  cell.textContent = text;
  cell.className = cls;
  grid.appendChild(cell);
}

// column letters
add('', 'head corner');
cols.forEach(c => {
  let cls = 'head';
  if (c === 'H') cls += ' picked';
  if (c === 'M' || c === 'O') cls += ' narrow';
  add(c, cls);
});

for (let row = 10; row <= 45; row++) {
  add(row, 'head rowhead' + (row === 19 ? ' picked' : ''));
  cols.forEach((c, i) => {
    const inTable = row >= 14 && row <= 38;
    let text = '';
    let cls = '';
    if (row === 12) {
      if (c === 'A') { text = 'NO OF QTY SHEETS FOR EACH PAGE SET'; cls = 'title'; }
      if (c === 'B') cls = 'under-title';
      if (i <= 11 || c === 'N') cls += ' edge';
    }
    if (row === 13) {
      if (c === 'A') text = 'LEVEL';
      if (i >= 1 && i <= 11) text = ranges[i - 1];
      if (c === 'N') text = 'TOTAL';
      if (text) cls = 'cream label-row';
      if (c === 'A' || c === 'N') cls += ' word';
    }
    if (inTable) {
      if (c === 'A') { text = levels[row - 14]; cls = 'cream'; }
      if (i >= 1 && i <= 11) cls = 'red';
      if (c === 'N') { text = totals[row] || 0; cls = 'total'; }
      if (c === 'B' && row === 14) { text = 50; cls = 'fifty'; }
      if (c === 'L' && row === 15) { text = 25; cls = 'pink'; }
      if (c === 'H' && row === 19) { text = 75; cls = 'selected'; }
    }
    if (c === 'M' && (inTable || row === 13)) cls = 'before-total';
    add(text, cls);
  });
}
```
